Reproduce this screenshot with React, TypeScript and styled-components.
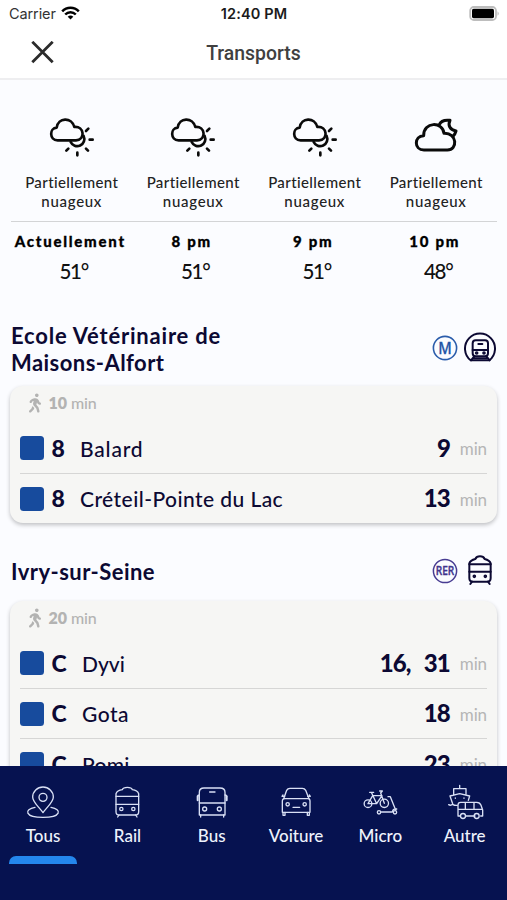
import React from "react";
import styled, { createGlobalStyle } from "styled-components";
import { FaWalking } from "react-icons/fa";

const NAVY = "#0c0933";

const GlobalStyle = createGlobalStyle`
  * { box-sizing: border-box; }
  body { margin: 0; background: #fbfcff; font-family: Lato, sans-serif; font-weight: 500; }
`;

const Screen = styled.div`
  width: 100%;
  height: 900px;
  display: flex;
  flex-direction: column;
  overflow: hidden;
  background: #fbfcff;
`;

const StatusBar = styled.div`
  flex: none;
  height: 27px;
  padding: 0 7px 0 9px;
  display: grid;
  grid-template-columns: 1fr auto 1fr;
  align-items: center;
  background: #fff;
  color: #222;
  font: 400 14.5px/27px Inter, sans-serif;
`;

const Carrier = styled.div`
  display: flex;
  align-items: center;
  gap: 5px;
  letter-spacing: -0.1px;
  color: #333;

  svg { margin-top: -1px; }
`;

const Clock = styled.div`
  margin-right: 1px;
  font-weight: 600;
  letter-spacing: 0.15px;
  color: #1b1b1b;
`;

const BatterySlot = styled.div`
  display: flex;
  justify-content: flex-end;
  margin-top: -1px;
`;

const Header = styled.header`
  flex: none;
  height: 53px;
  padding: 0 30px 2px;
  display: grid;
  grid-template-columns: 24px 1fr 24px;
  align-items: center;
  background: #fff;
  border-bottom: 2px solid #eeeef0;
`;

const PageTitle = styled.h1`
  margin: 3px 0 0;
  text-align: center;
  font: 500 19.4px/48px Roboto, sans-serif;
  color: #404040;
`;

const Content = styled.main`
  flex: 1;
  min-height: 0;
  overflow: hidden;
  padding: 34px 10px 0;
`;

const Forecast = styled.section`
  display: grid;
  grid-template-columns: repeat(4, 1fr);
  margin: 0 0 0 1px;
`;

const Sky = styled.div`
  height: 108px;
  display: flex;
  flex-direction: column;
  align-items: center;
  border-bottom: 1.5px solid #d3d4d6;
`;

const SkyIcon = styled.svg`
  flex: none;
  width: 50px;
  height: 46px;
  margin-bottom: 13px;
  overflow: visible;
  fill: none;
  stroke: #0a0a0a;
  stroke-width: 8;
  stroke-linecap: round;
  stroke-linejoin: round;
`;

const SkyText = styled.div<{ $ls: number }>`
  font-size: 15px;
  line-height: 18.5px;
  letter-spacing: ${(p) => p.$ls}px;
  color: #222;
`;

const Moment = styled.div`
  display: flex;
  flex-direction: column;
  align-items: center;
  padding: 9px 0 0;
`;

const Hour = styled.div`
  margin-right: 3px;
  font-size: 15px;
  font-weight: 900;
  line-height: 20px;
  letter-spacing: 1.75px;
  white-space: nowrap;
  color: #000;
  -webkit-text-stroke: 0.3px #000;
`;

const Degrees = styled.div`
  margin: 7px 0 0 4px;
  font-size: 20.5px;
  line-height: 26px;
  letter-spacing: -1.2px;
  color: #111;
`;

const Station = styled.section<{ $gap: number }>`
  margin-top: ${(p) => p.$gap}px;
`;

const StationHead = styled.div<{ $space: number }>`
  display: flex;
  align-items: center;
  justify-content: space-between;
  margin: 0 1px ${(p) => p.$space}px;
`;

const StationName = styled.h2`
  margin: 0;
  font-size: 22px;
  font-weight: 700;
  line-height: 27px;
  color: ${NAVY};
`;

const NameLine = styled.span<{ $ls: number }>`
  display: block;
  letter-spacing: ${(p) => p.$ls}px;
`;

const Modes = styled.div`
  display: flex;
  align-items: center;
  gap: 6px;
  margin-top: -1px;
`;

const Badge = styled.svg`
  width: 26px;
  height: 26px;
`;

const BadgeText = styled.text<{ $size: number }>`
  font-family: "Noto Sans", sans-serif;
  font-size: ${(p) => p.$size}px;
  font-weight: 500;
  text-anchor: middle;
`;

const ModeIcon = styled.svg`
  width: 32px;
  height: 32px;
  fill: none;
  stroke: ${NAVY};
  stroke-width: 6;
  stroke-linecap: round;
  stroke-linejoin: round;
`;

const Card = styled.div`
  width: 487px;
  border-radius: 13px;
  background: #f6f6f4;
  box-shadow: 0 2px 4px rgba(0, 0, 0, 0.24);
`;

const Walk = styled.div`
  height: 37px;
  padding: 7px 0 0 19px;
  display: flex;
  align-items: flex-start;
  font-size: 16px;
  line-height: 20px;
  color: #b3b3b2;

  svg { width: 12px; height: 20px; margin-right: 7.5px; }
  b { font-weight: 800; letter-spacing: -0.1px; margin-right: 4px; }
  span { letter-spacing: -0.1px; }
`;

const Departure = styled.div`
  height: 50.2px;
  margin: 0 10px;
  display: flex;
  align-items: center;
  color: ${NAVY};

  & + & { border-top: 1.5px solid #d6d6d5; }
`;

const Swatch = styled.div`
  flex: none;
  width: 24px;
  height: 24px;
  border-radius: 3.5px;
  background: #174b9d;
`;

const Line = styled.div<{ $wide?: boolean }>`
  width: ${(p) => (p.$wide ? 38 : 36)}px;
  padding: 0 0 1px 7.5px;
  font-size: 23px;
  font-weight: 900;
`;

const Destination = styled.div<{ $ls: number }>`
  flex: 1;
  font-size: 21px;
  letter-spacing: ${(p) => p.$ls}px;
`;

const Waits = styled.div`
  display: flex;
  gap: 13px;
  padding-bottom: 2px;
  font-size: 24px;
  font-weight: 900;
  letter-spacing: -0.8px;
`;

const Unit = styled.div`
  width: 37px;
  padding-top: 1px;
  text-align: right;
  font-size: 17px;
  font-weight: 400;
  letter-spacing: -0.1px;
  color: #b5b5b5;
`;

const TabBar = styled.nav`
  flex: none;
  height: 134px;
  padding-left: 1px;
  display: grid;
  grid-template-columns: repeat(6, 84.3px);
  align-items: start;
  background: #061250;
`;

const Tab = styled.div`
  display: flex;
  flex-direction: column;
  align-items: center;
  padding-top: 18px;
`;

const TabIcon = styled.svg`
  width: 40px;
  height: 38px;
  overflow: visible;
  fill: none;
  stroke: #d9e0f5;
  stroke-width: 4;
  stroke-linecap: round;
  stroke-linejoin: round;
`;

const TabLabel = styled.div`
  margin-top: 4px;
  font-size: 17px;
  line-height: 20px;
  color: #eef2fc;
`;

const Indicator = styled.div`
  width: 68px;
  height: 7.5px;
  margin-top: 10px;
  border-radius: 7px 7px 0 0;
  background: #2486ec;
`;

const SunCloud = () => (
  <SkyIcon viewBox="140 26 150 138">
    <path d="M172 105C146 104 147 68 169 67C173 36 214 34 222 65C252 62 256 104 227 105Z" />
    <path d="M250 92A21 21 0 0 1 211 110" />
    <path d="M257 77l7-7M268 103h9M257 130l6 6M231 142v8M204 130l-6 6" />
  </SkyIcon>
);

const MoonCloud = () => (
  <SkyIcon viewBox="471 26 150 138">
    <path strokeWidth="9" d="M510 134C479 134 480 92 509 91C509 48 566 48 570 84C610 82 612 134 580 134Z" />
    <path strokeWidth="9" d="M556 58C560 48 572 43 588 45C581 60 587 73 606 77C604 84 602 89 597 93" />
  </SkyIcon>
);

const WifiGlyph = () => (
  <svg width="19" height="14" viewBox="0 0 19 14" fill="none" stroke="#000" strokeWidth="2.5">
    <path d="M1.2 5.3C5.8 .4 13.2 .4 17.8 5.3" />
    <path d="M4.2 8.5C7.2 5.4 11.8 5.4 14.8 8.5" />
    <path d="M9.5 13.6L6.7 10.8C8.2 9.2 10.8 9.2 12.3 10.8Z" fill="#000" stroke="none" />
  </svg>
);

const BatteryGlyph = () => (
  <svg width="31" height="15" viewBox="0 0 31 15">
    <rect x="1.2" y="1" width="25.8" height="13" rx="3.6" fill="#fff" stroke="#bdbdbd" strokeWidth="1.8" />
    <rect x="3" y="2.8" width="22" height="9.4" rx="1.6" fill="#000" />
    <path d="M28.6 5.2q2 2.3 0 4.6z" fill="#aaa" />
  </svg>
);

const CloseGlyph = () => (
  <svg width="24" height="24" viewBox="0 0 24 24" stroke="#2b2b2b" strokeWidth="2.8" fill="none">
    <path d="M2.3 .8L22.7 21.2M22.7 .8L2.3 21.2" />
  </svg>
);

const MetroModes = () => (
  <Modes>
    <Badge viewBox="0 0 26 26">
      <circle cx="13" cy="13" r="11.6" fill="none" stroke="#2a5cab" strokeWidth="1.6" />
      <BadgeText x="13" y="18.9" $size={16.5} fill="#2154a6" stroke="#2154a6" strokeWidth="0.3" textLength="13.5" lengthAdjust="spacingAndGlyphs">M</BadgeText>
    </Badge>
    <ModeIcon viewBox="630 49 96 96">
      <path d="M650 134A45 45 0 1 1 706 134Z" />
      <rect x="656" y="74" width="46" height="48" rx="9" />
      <path d="M656 103h46M673 85h12M660 123l-9 11M698 123l9 11M658 128h42" />
      <circle cx="668" cy="112" r="2.5" />
      <circle cx="690" cy="112" r="2.5" />
    </ModeIcon>
  </Modes>
);

const RerModes = () => (
  <Modes>
    <Badge viewBox="0 0 26 26">
      <circle cx="13" cy="13" r="11.6" fill="none" stroke="#473c92" strokeWidth="1.5" />
      <BadgeText x="13" y="17.2" $size={11.8} fill="#40348d" stroke="#40348d" strokeWidth="0.4" textLength="18.5" lengthAdjust="spacingAndGlyphs">RER</BadgeText>
    </Badge>
    <ModeIcon viewBox="631 42 96 96">
      <path d="M647 111V67C650 58 657 56 665 54C668 47 672 46 679 46C686 46 690 47 693 54C701 56 708 58 711 67V111Q711 122 701 122H657Q647 122 647 111Z" />
      <path d="M647 70h64M647 92h64M655 122l-5 7M703 122l5 7" />
      <circle cx="662" cy="106" r="2.5" />
      <circle cx="695" cy="106" r="2.5" />
    </ModeIcon>
  </Modes>
);

const PinGlyph = () => (
  <TabIcon viewBox="71 57 120 114">
    <path d="M131 143C118 124 100 112 100 96a31 30 0 0 1 62 0C162 112 144 124 131 143Z" />
    <circle cx="131" cy="97" r="12" />
    <path d="M107 127C73 133 76 157 131 157C186 157 189 133 155 127" />
  </TabIcon>
);

const RailGlyph = () => (
  <TabIcon viewBox="323 57 120 114">
    <path d="M350 140V86C353 77 360 75 369 74C371 68 375 67 384 67C393 67 397 68 399 74C408 75 415 77 418 86V140Q418 150 408 150H360Q350 150 350 140Z" />
    <path d="M350 94h68M350 118h68M359 150l-4 6M409 150l4 6" />
    <circle cx="366" cy="132" r="5" />
    <circle cx="402" cy="132" r="5" />
  </TabIcon>
);

const BusGlyph = () => (
  <TabIcon viewBox="577 57 120 114">
    <path d="M599 150V82Q599 69 613 69H661Q676 69 676 82V150Z" />
    <path d="M599 114h77M630 81h16M603 150v6M672 150v6" />
    <path d="M594 94v12M681 94v12" strokeWidth="6" />
    <path d="M599 90q-5 0-5 5M676 90q5 0 5 5" />
    <circle cx="615" cy="132" r="6" />
    <circle cx="659" cy="132" r="6" />
  </TabIcon>
);

const CarGlyph = () => (
  <TabIcon viewBox="68 57 120 114">
    <path d="M91 101L100 76Q103 70 110 70H147Q154 70 157 76L167 101" />
    <path d="M87 142V108Q87 101 94 101H164Q170 101 170 108V142ZM119 127h20M89 90l-3 4h8M168 90l3 4h-8" />
    <path d="M89 142v9h6v-9M162 142v9h6v-9" />
    <circle cx="103" cy="118" r="5" />
    <circle cx="154" cy="118" r="5" />
  </TabIcon>
);

const MicroGlyph = () => (
  <TabIcon viewBox="320 57 120 114">
    <circle cx="344" cy="116" r="11.5" />
    <circle cx="393" cy="115" r="12.5" />
    <path d="M344 116L358 92H386L370 116ZM354 82L370 116M349 82h12M379 78h8l-5 6L393 115" />
    <path d="M404 95h7L427 135M384 141H417C418 134 423 130 430 132" />
    <circle cx="377" cy="142" r="5" />
    <circle cx="425" cy="142" r="5" />
  </TabIcon>
);

const OtherGlyph = () => (
  <TabIcon viewBox="573 57 120 114">
    <path d="M617 61v10M599 89V71H636V89M588 93L617 86L647 93L643 106M588 93L596 116M604 99v1M630 99v1M584 119Q590 123 596 118Q602 122 610 121" />
    <path d="M612 151V120Q612 112 620 112H668Q678 112 681 121L686 135V153H680M663 153H636M618 153H612M612 133H685M634 112v21M660 112v21" />
    <circle cx="627" cy="153" r="7.5" />
    <circle cx="668" cy="153" r="7.5" />
  </TabIcon>
);

const hours = [
  { hour: "Actuellement", temp: "51°", Icon: SunCloud },
  { hour: "8 pm", temp: "51°", Icon: SunCloud },
  { hour: "9 pm", temp: "51°", Icon: SunCloud },
  { hour: "10 pm", temp: "48°", Icon: MoonCloud },
];

const stations = [
  {
    name: [{ text: "Ecole Vétérinaire de", ls: 0.8 }, { text: "Maisons-Alfort", ls: 0.45 }],
    gap: 37.5, space: 10.6, walk: "10", Icons: MetroModes, wide: false,
    rows: [
      { line: "8", to: "Balard", ls: 0.8, waits: ["9"] },
      { line: "8", to: "Créteil-Pointe du Lac", ls: 0.44, waits: ["13"] },
    ],
  },
  {
    name: [{ text: "Ivry-sur-Seine", ls: 0.45 }],
    gap: 32.5, space: 14.1, walk: "20", Icons: RerModes, wide: true,
    rows: [
      { line: "C", to: "Dyvi", ls: 0, waits: ["16,", "31"] },
      { line: "C", to: "Gota", ls: 0.5, waits: ["18"] },
      { line: "C", to: "Pomi", ls: 0.3, waits: ["23"] },
    ],
  },
];

const tabs = [
  { label: "Tous", Icon: PinGlyph },
  { label: "Rail", Icon: RailGlyph },
  { label: "Bus", Icon: BusGlyph },
  { label: "Voiture", Icon: CarGlyph },
  { label: "Micro", Icon: MicroGlyph },
  { label: "Autre", Icon: OtherGlyph },
];

export default function App() {
  return (
    <Screen>
      <GlobalStyle />
      <StatusBar>
        <Carrier>Carrier <WifiGlyph /></Carrier>
        <Clock>12:40 PM</Clock>
        <BatterySlot><BatteryGlyph /></BatterySlot>
      </StatusBar>
      <Header>
        <CloseGlyph />
        <PageTitle>Transports</PageTitle>
      </Header>
      <Content>
        <Forecast>
          {hours.map(({ hour, Icon }) => (
            <Sky key={hour}>
              <Icon />
              <SkyText $ls={0.4}>Partiellement</SkyText>
              <SkyText $ls={0.7}>nuageux</SkyText>
            </Sky>
          ))}
          {hours.map(({ hour, temp }) => (
            <Moment key={hour}>
              <Hour>{hour}</Hour>
              <Degrees>{temp}</Degrees>
            </Moment>
          ))}
        </Forecast>
        {stations.map(({ name, gap, space, walk, Icons, wide, rows }) => (
          <Station key={walk} $gap={gap}>
            <StationHead $space={space}>
              <StationName>
                {name.map((n) => <NameLine key={n.text} $ls={n.ls}>{n.text}</NameLine>)}
              </StationName>
              <Icons />
            </StationHead>
            <Card>
              <Walk><FaWalking /><b>{walk}</b><span>min</span></Walk>
              {rows.map((r) => (
                <Departure key={r.to}>
                  <Swatch />
                  <Line $wide={wide}>{r.line}</Line>
                  <Destination $ls={r.ls}>{r.to}</Destination>
                  <Waits>{r.waits.map((w) => <span key={w}>{w}</span>)}</Waits>
                  <Unit>min</Unit>
                </Departure>
              ))}
            </Card>
          </Station>
        ))}
      </Content>
      <TabBar>
        {tabs.map(({ label, Icon }, i) => (
          <Tab key={label}>
            <Icon />
            <TabLabel>{label}</TabLabel>
            {i === 0 && <Indicator />}
          </Tab>
        ))}
      </TabBar>
    </Screen>
  );
}
